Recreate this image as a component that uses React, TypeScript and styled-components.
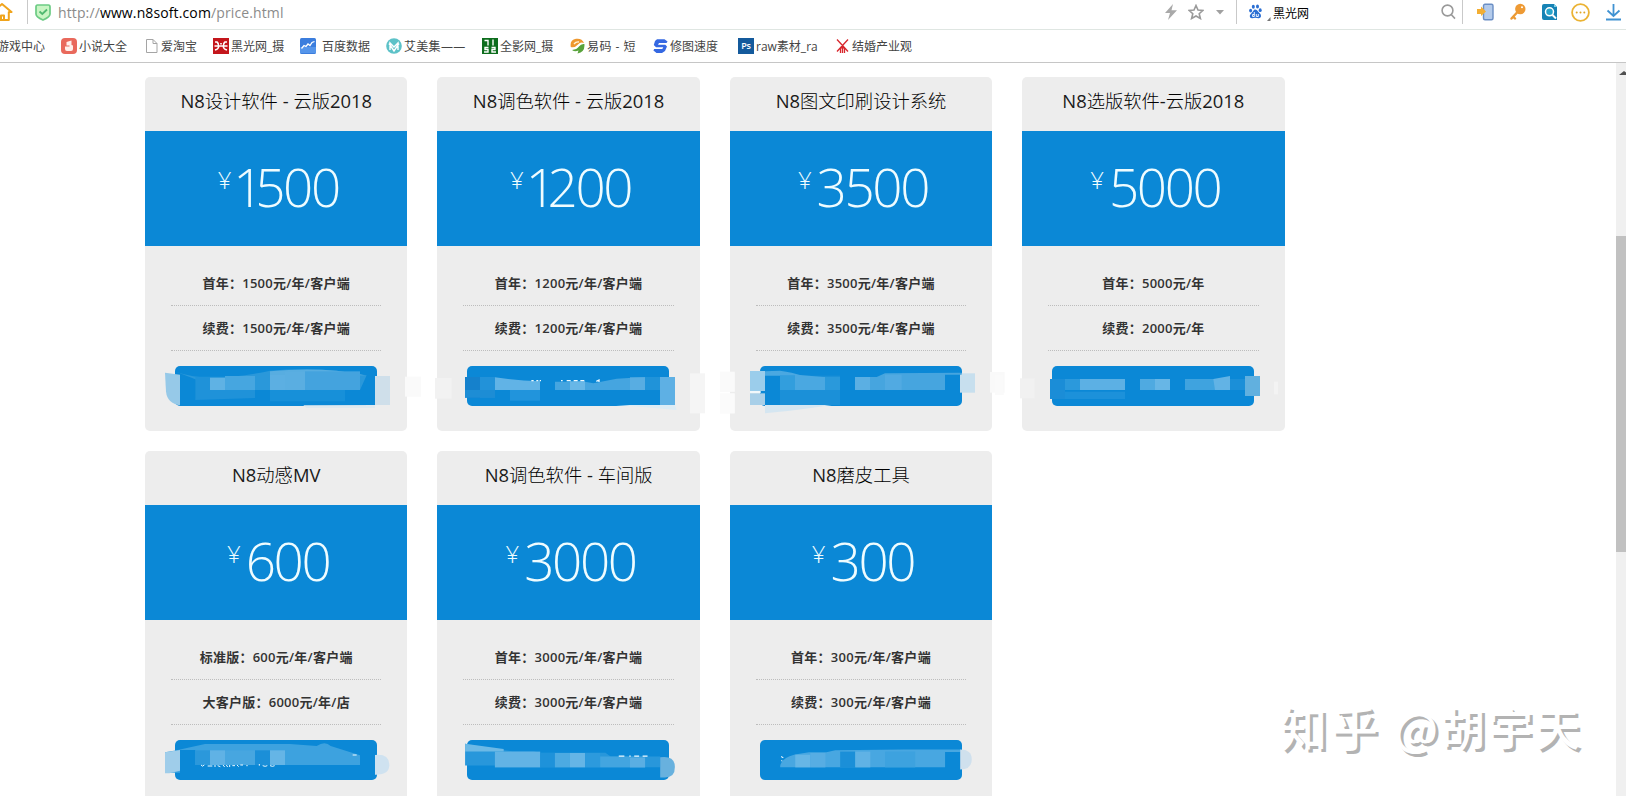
import React from "react";
import styled, { createGlobalStyle } from "styled-components";

const latin = `"Open Sans", "Noto Sans CJK SC", sans-serif`;

const GlobalStyle = createGlobalStyle`
  * { box-sizing: border-box; }
  html, body { margin: 0; height: 100%; overflow: hidden; background: #fff; }
  body { font-family: ${latin}; color: #333; }
`;

const Window = styled.div`
  position: relative;
  display: flex;
  flex-direction: column;
  width: 1626px;
  height: 796px;
  overflow: hidden;
`;

const AddressBar = styled.header`
  display: flex;
  align-items: center;
  flex: none;
  height: 30px;
  padding-bottom: 5px;
  border-bottom: 1px solid #dfe6e2;
`;

const Slot = styled.span<{ $w: number; $dy?: number }>`
  display: flex;
  flex: none;
  width: ${(p) => p.$w}px;
  margin-top: ${(p) => p.$dy ?? 0}px;
`;

const Divider = styled.span<{ $w: number }>`
  flex: none;
  align-self: flex-start;
  width: ${(p) => p.$w}px;
  height: 24px;
  border-left: 1px solid #c9c9c9;
`;

const Url = styled.span`
  width: 1107px;
  padding-top: 2px;
  font-size: 14px;
  line-height: 20px;
  letter-spacing: 0.12px;
  color: #8b8b8b;
  white-space: nowrap;
  b { font-weight: 400; color: #000; }
`;

const SearchText = styled.span`
  width: 168px;
  padding-top: 1px;
  font: 12px/18px "Noto Sans CJK SC", sans-serif;
  color: #000;
`;

const Bookmarks = styled.nav`
  display: flex;
  align-items: center;
  flex: none;
  height: 33px;
  border-bottom: 1px solid #c6c6c6;
`;

const Bookmark = styled.span<{ $w: number; $gap?: number; $shift?: number; $ls?: number }>`
  display: flex;
  align-items: center;
  flex: none;
  gap: ${(p) => p.$gap ?? 2}px;
  width: ${(p) => p.$w}px;
  margin-left: ${(p) => p.$shift ?? 0}px;
  font: 12px/18px "Open Sans", "Noto Sans CJK SC", sans-serif;
  letter-spacing: ${(p) => p.$ls ?? 0}px;
  color: #444;
  white-space: nowrap;
  svg { flex: none; }
`;

const Label = styled.span`
  padding-top: 1px;
`;

const Body = styled.div`
  display: flex;
  justify-content: space-between;
  flex: 1;
  min-height: 0;
`;

const Grid = styled.main`
  display: grid;
  grid-template-columns: repeat(4, 262.4px);
  grid-auto-rows: 354px;
  column-gap: 30px;
  row-gap: 20px;
  padding: 14px 0 0 145px;
`;

const Card = styled.section`
  position: relative;
  display: flex;
  flex-direction: column;
  border-radius: 5px;
  background: #ededed;
`;

const Title = styled.h3`
  height: 54px;
  margin: 0;
  text-align: center;
  font: 300 18.3px/48px "Open Sans", "Noto Sans CJK SC", sans-serif;
  color: #000;
`;

const LatinRun = styled.span`
  font-weight: 400;
  font-size: 18.4px;
  color: #1a1a1a;
`;

const Price = styled.div`
  display: flex;
  justify-content: center;
  height: 115px;
  padding-left: 4px;
  background: #0b88d6;
  color: #effcff;
  font-family: ${latin};
  font-weight: 300;
`;

const Yen = styled.span<{ $tight: boolean }>`
  margin-right: ${(p) => (p.$tight ? 2 : 5)}px;
  font-size: 24px;
  line-height: 98px;
`;

const Amount = styled.span`
  font-size: 53px;
  line-height: 112px;
  letter-spacing: -2.4px;
`;

const NarrowOne = styled.span`
  letter-spacing: -8.4px;
`;

const Features = styled.ul`
  margin: 15px 26px 0;
  padding: 0;
  list-style: none;
`;

const Feature = styled.li`
  height: 45px;
  border-bottom: 1px dotted #bdbdbd;
  text-align: center;
  font: 600 13px/44px "Open Sans", "Noto Sans CJK SC", sans-serif;
  letter-spacing: 0.26px;
  color: #333;
`;

const BuyButton = styled.div`
  width: 202px;
  height: 40px;
  margin: 15px 0 0 30px;
  border-radius: 5px;
  background: #0b88d6;
`;

const Smudge = styled.svg<{ $x: number; $y: number }>`
  position: absolute;
  z-index: 1;
  left: ${(p) => p.$x}px;
  top: ${(p) => p.$y}px;
  overflow: visible;
  pointer-events: none;
`;

const Scrollbar = styled.div`
  flex: none;
  width: 10px;
  background: #f0f0f0;
  overflow: hidden;
`;

const ArrowUp = styled.div`
  margin: 8px 0 0 3px;
  width: 0;
  border: 5px solid transparent;
  border-top: 0;
  border-bottom: 4px solid #505050;
`;

const Thumb = styled.div`
  height: 316px;
  margin-top: 161px;
  background: #c1c1c1;
`;

const Watermark = styled.div`
  position: absolute;
  left: 1280px;
  top: 696px;
  font: 500 45px/60px "Noto Sans CJK SC", sans-serif;
  letter-spacing: 2.4px;
  white-space: nowrap;
  color: #fff;
  text-shadow: 3px 3px 0 #b3b3b3;
`;

const Brand = styled.span`
  font-size: 47px;
  letter-spacing: 3.8px;
`;

type Block = [number, number, number, number, string];

const blocks = (list: Block[]) =>
  list.map(([x, y, w, h, fill], i) => <rect key={i} x={x} y={y} width={w} height={h} fill={fill} />);

type Product = {
  title: string;
  price: number;
  rows: [string, string];
  dx: number;
  dy: number;
  smudge: React.ReactNode;
};

const products: Product[] = [
  {
    title: "N8设计软件 - 云版2018",
    price: 1500,
    rows: ["首年：1500元/年/客户端", "续费：1500元/年/客户端"],
    dx: -15,
    dy: 173,
    smudge: (
      <>
        <path d="M105 368L150 374V466Q112 460 108 425Z" fill="#96c9e8" />
        <rect x="735" y="378" width="45" height="87" fill="#cfdfea" />
        <path d="M520 466L735 465V474H530Z" fill="#dfe9ef" />
        <path d="M140 366Q190 384 250 383Q330 382 420 362Q520 354 620 362L710 376L690 420H240L196 388Z" fill="#2a98da" />
        <path d="M420 364Q520 354 620 362L705 376H420Z" fill="#58ade0" />
        <path d="M196 380H375V444L196 450Z" fill="#1f92d9" />
        {blocks([[240, 383, 45, 37, "#5fb2e4"], [285, 378, 90, 42, "#46a6e0"], [420, 374, 45, 46, "#5cafe2"], [465, 366, 60, 54, "#5aaee1"], [525, 364, 165, 56, "#44a3de"], [420, 420, 225, 34, "#1790d9"], [825, 380, 48, 60, "#fafafa"]])}
      </>
    ),
  },
  {
    title: "N8调色软件 - 云版2018",
    price: 1200,
    rows: ["首年：1200元/年/客户端", "续费：1200元/年/客户端"],
    dx: -7,
    dy: 263,
    smudge: (
      <>
        {blocks([[105, 111, 45, 62, "#1581cc"], [150, 111, 45, 62, "#2292d9"], [105, 150, 90, 23, "#1d8dd5"], [240, 150, 90, 32, "#2194dc"], [690, 111, 45, 84, "#5eb0e4"], [645, 111, 45, 39, "#2093d9"], [15, 114, 50, 62, "#f2f2f2"], [780, 100, 45, 120, "#f5f5f5"], [870, 97, 44, 58, "#f8f8f8"], [870, 161, 44, 59, "#f9f9f9"]])}
        <path d="M195 112Q260 122 330 124V150H195Z" fill="#61b3e6" />
        <path d="M375 125H465L490 130L560 116L645 111V150H375Z" fill="#45a5e0" />
        <rect x="420" y="124" width="45" height="26" fill="#68b7e7" />
        <rect x="600" y="112" width="45" height="38" fill="#58ade2" />
        <path d="M558 195H735L740 210L630 200Z" fill="#dcecf5" />
        <path d="M304 122h7m8 0h6m4 0h4m60 0h5m12 0h12m9 0h12m8 0h12m36 2l8 -4v6" fill="none" stroke="#effaff" strokeWidth="4" />
      </>
    ),
  },
  {
    title: "N8图文印刷设计系统",
    price: 3500,
    rows: ["首年：3500元/年/客户端", "续费：3500元/年/客户端"],
    dx: -20,
    dy: 263,
    smudge: (
      <>
        {blocks([[120, 93, 45, 60, "#9bcdeb"], [120, 153, 32, 6, "#f2f8fb"], [120, 160, 45, 35, "#a8cfe8"], [210, 107, 180, 88, "#1b90d8"], [750, 100, 45, 58, "#c7dfee"], [30, 95, 44, 60, "#fafafa"], [30, 160, 44, 60, "#fbfbfb"], [840, 96, 44, 62, "#f9f9f9"]])}
        <path d="M165 94L210 92Q250 98 270 105L340 111H390V150H255V107H165Z" fill="#4aa8e1" />
        <rect x="210" y="107" width="45" height="43" fill="#329edd" />
        <rect x="345" y="111" width="45" height="39" fill="#2a99db" />
        <path d="M435 111H500L525 100L755 98V104H705V150H435Z" fill="#46a5df" />
        <rect x="435" y="111" width="45" height="39" fill="#5bafe3" />
        <rect x="525" y="104" width="50" height="46" fill="#51aae2" />
        <path d="M165 195H365Q300 205 240 212L165 220Z" fill="#d5e6f1" />
      </>
    ),
  },
  {
    title: "N8选版软件-云版2018",
    price: 5000,
    rows: ["首年：5000元/年", "续费：2000元/年"],
    dx: -22,
    dy: 173,
    smudge: (
      <>
        {blocks([[150, 387, 45, 60, "#1b8dd7"], [195, 387, 45, 33, "#2b99dc"], [195, 425, 180, 22, "#1c91da"], [240, 387, 135, 33, "#5cb0e4"], [420, 387, 90, 33, "#4faae1"], [465, 387, 45, 33, "#67b6e6"], [555, 387, 90, 33, "#3fa3df"], [690, 387, 45, 33, "#1b8fd8"], [735, 378, 45, 60, "#61b0df"], [60, 385, 44, 60, "#f1f1f1"], [822, 395, 12, 38, "#f3f3f3"], [-15, 375, 26, 60, "#fafafa"]])}
        <path d="M640 387L690 378V420H645Z" fill="#62b3e5" />
      </>
    ),
  },
  {
    title: "N8动感MV",
    price: 600,
    rows: ["标准版：600元/年/客户端", "大客户版：6000元/年/店"],
    dx: -15,
    dy: 189,
    smudge: (
      <>
        <path d="M105 337L140 331L225 312H480L560 318Q585 302 602 318L690 346V375H196V330H150V398H105Z" fill="#3da2df" />
        <path d="M105 337L150 330V392L118 400H105Z" fill="#9fcdea" />
        {blocks([[196, 331, 44, 44, "#2b98db"], [240, 331, 45, 44, "#60b2e5"], [285, 331, 90, 44, "#47a6e0"], [375, 331, 45, 44, "#1b8fd8"], [420, 331, 45, 44, "#65b5e6"]])}
        <path d="M735 345Q778 340 778 376Q778 405 735 404Z" fill="#cfe2f0" />
        <path d="M213 375q4 7 10 0m10 3h14m8 -3v6m8 -4l8 3m8 -5l5 6m5 -6l4 6m6 -6v6m8 -4h8m6 -2l5 5m5 -5h8m10 2h4m35 -5v5m10 0q8 4 14 0m8 0q8 4 14 0" fill="none" stroke="#effaff" strokeWidth="3" />
        <path d="M668 345h12" stroke="#effaff" strokeWidth="3" />
      </>
    ),
  },
  {
    title: "N8调色软件 - 车间版",
    price: 3000,
    rows: ["首年：3000元/年/客户端", "续费：3000元/年/客户端"],
    dx: -7,
    dy: 269,
    smudge: (
      <g transform="scale(1.0526)">
        <path d="M100 68Q165 80 235 89H295L315 93H500L515 104H656V135H185V130H100Z" fill="#2897db" />
        <path d="M100 68L210 83V90H100Z" fill="#6cb9e6" />
        {blocks([[185, 90, 129, 45, "#62b3e5"], [314, 94, 42, 41, "#1e92da"], [356, 94, 43, 41, "#4caae2"], [399, 94, 43, 41, "#65b5e6"], [442, 94, 43, 41, "#2c9add"], [485, 104, 128, 31, "#43a5e0"], [570, 108, 43, 27, "#5aaee3"]])}
        <path d="M656 106Q698 100 698 134Q698 164 670 164H656Z" fill="#68b1de" />
        <path d="M538 103h16m14 0h4m10 0h14m10 0h14" stroke="#effaff" strokeWidth="3" />
      </g>
    ),
  },
  {
    title: "N8磨皮工具",
    price: 300,
    rows: ["首年：300元/年/客户端", "续费：300元/年/客户端"],
    dx: -300,
    dy: 269,
    smudge: (
      <g transform="scale(1.0526)">
        <path d="M998 135Q998 108 1040 98L1080 92H1130L1155 86L1350 84H1512V91H1468V135Z" fill="#48a7e1" />
        {blocks([[1041, 99, 43, 36, "#66b6e6"], [1084, 94, 43, 41, "#57ade3"], [1169, 90, 43, 45, "#1b8fd8"], [1212, 90, 43, 45, "#60b2e5"], [1297, 90, 86, 45, "#3da2df"]])}
        <path d="M1511 84Q1544 84 1544 112Q1544 141 1511 141Z" fill="#cfe0ed" />
        <path d="M1001 104l6 4m-6 8h3" stroke="#effaff" strokeWidth="3" />
      </g>
    ),
  },
];

const Icon16 = (p: { children: React.ReactNode; w?: number }) => (
  <svg width={p.w ?? 16} height="16" viewBox={`0 0 ${p.w ?? 16} 16`}>{p.children}</svg>
);

const Home = () => (
  <svg width="14" height="20" viewBox="0 0 14 20" fill="none" stroke="#f0a41c" strokeWidth="2" strokeLinejoin="round">
    <path d="M-7 10L2 2L11.5 10H8.8V18H-5" /><path d="M1 18V13.5H4V18" />
  </svg>
);

const Shield = () => (
  <svg width="16" height="17" viewBox="0 0 16 17">
    <path d="M2.5 1H13.5Q15 1 15 3V10Q15 13 8 16Q1 13 1 10V3Q1 1 2.5 1Z" fill="#c9f5c4" stroke="#6ccb84" strokeWidth="1.7" />
    <path d="M4.5 7.5L7.3 10L12 5.5" fill="none" stroke="#4fb870" strokeWidth="1.8" />
  </svg>
);

const Bolt = () => (
  <svg width="12" height="17" viewBox="0 0 12 17"><path d="M8 0L0 9H5L3 16L12 6.2H6.5Z" fill="#a9a9a9" /></svg>
);

const Star = () => (
  <svg width="16" height="16" viewBox="0 0 16 16" fill="none" stroke="#9a9a9a" strokeWidth="1.6">
    <path d="M8 1.5L10 6L15 6.4L11.2 9.7L12.4 14.5L8 12L3.6 14.5L4.8 9.7L1 6.4L6 6Z" />
  </svg>
);

const Caret = () => (
  <svg width="8" height="5" viewBox="0 0 8 5"><path d="M0 0H8L4 4.5Z" fill="#a0a0a0" /></svg>
);

const Paw = () => (
  <svg width="22" height="17" viewBox="0 0 22 17" fill="#2b6fd3">
    <ellipse cx="4.3" cy="2.8" rx="1.5" ry="2" /><ellipse cx="8.5" cy="2.4" rx="1.5" ry="2" />
    <ellipse cx="1.6" cy="6.6" rx="1.5" ry="1.9" /><ellipse cx="11.2" cy="6.2" rx="1.5" ry="1.9" />
    <path d="M6.3 5.5C8.5 5.5 9 8 11 9.6C13 12 11.8 14.5 9.5 14.2Q6.3 13.4 3.2 14.2C.6 14.5 0 11.5 2 9.8C4 8 4.3 5.5 6.3 5.5Z" />
    <path d="M5.3 8V12.5H3.6V10.5H5.3M7.3 10V12.5H9.3V10" fill="none" stroke="#fff" strokeWidth=".9" />
    <path d="M21.5 13V17H18Z" fill="#777" />
  </svg>
);

const Magnifier = () => (
  <svg width="15" height="16" viewBox="0 0 15 16" fill="none" stroke="#9a9a9a" strokeWidth="1.6">
    <circle cx="6.5" cy="6.5" r="5.4" /><path d="M10.2 10.5L14 14.6" />
  </svg>
);

const PhoneIn = () => (
  <svg width="17" height="18" viewBox="0 0 17 18">
    <rect x="6.5" y="1.2" width="9.5" height="15.5" rx="1.5" fill="#b4cbeb" stroke="#6a8ec4" strokeWidth="1.4" />
    <path d="M0 6H4V3.5L9 8.5L4 13V11H0Z" fill="#f3ae33" />
  </svg>
);

const Key = () => (
  <svg width="16" height="18" viewBox="0 0 16 18">
    <path d="M7.5 9L1.5 15.5M3.5 14L5 15.5" stroke="#ec9a34" strokeWidth="2.4" strokeLinecap="round" />
    <circle cx="10.3" cy="6" r="5.2" fill="#ee9a34" /><circle cx="12" cy="4.3" r="1" fill="#fff" />
  </svg>
);

const SearchDoc = () => (
  <svg width="16" height="17" viewBox="0 0 16 17">
    <path d="M2 0H12L15 3V16H2Q0 16 0 14V2Q0 0 2 0Z" fill="#1683b5" /><path d="M12 0L15 3H12Z" fill="#7fd0e6" />
    <circle cx="7.5" cy="7.8" r="4" fill="#2aa5cb" stroke="#fff" strokeWidth="1.5" /><path d="M10.5 11L14 14.5" stroke="#fff" strokeWidth="2" />
  </svg>
);

const MoreDots = () => (
  <svg width="19" height="19" viewBox="0 0 19 19">
    <circle cx="9.5" cy="9.5" r="8.4" fill="none" stroke="#ebb334" strokeWidth="1.8" />
    <g fill="#e0a526"><circle cx="5.7" cy="9.5" r="1" /><circle cx="9.5" cy="9.5" r="1" /><circle cx="13.3" cy="9.5" r="1" /></g>
  </svg>
);

const Download = () => (
  <svg width="15" height="17" viewBox="0 0 15 17" fill="none" stroke="#3f92d2" strokeWidth="1.8">
    <path d="M7.5 0V12M1.5 6.5L7.5 12L13.5 6.5M0 15.5H15" />
  </svg>
);

const NovelIcon = () => (
  <Icon16>
    <rect width="16" height="16" rx="4" fill="#e9695c" />
    <path d="M5.5 4L10.5 2.5V7L12 7.5V11Q12 13 10 13H6Q4 13 4 11V8.5H8.5V7.5H5.5Z" fill="#fff0ec" />
  </Icon16>
);
const PageIcon = () => (
  <Icon16 w={13}><path d="M1.5 1.5H8L12 5.5V14.5H1.5ZM8 1.5V5.5H12" fill="#fff" stroke="#a5a5a5" /></Icon16>
);
const HeiguangIcon = () => (
  <Icon16>
    <rect width="16" height="16" fill="#c4161c" />
    <path d="M2 4H4Q6 5.5 5.5 8Q6 11 2 12M14 4H12Q10 5.5 10.5 8Q10 11 14 12M1.5 8H14.5M8 5V6.5" fill="none" stroke="#fff" strokeWidth="1.6" />
  </Icon16>
);
const ChartIcon = () => (
  <Icon16>
    <rect width="16" height="16" rx="1.5" fill="#3b7ddd" /><path d="M0 9H16V15H0Z" fill="#5595ea" />
    <path d="M1.5 10.5L4 7.5L6 8.5L8 6L10 7.5L12 4.5L14.5 3.5" fill="none" stroke="#fff" strokeWidth="1.3" />
  </Icon16>
);
const AimeiIcon = () => (
  <Icon16>
    <circle cx="8" cy="8" r="7.8" fill="#5dc2c8" />
    <path d="M4 12V5L8 9L12 5V12M3 5.5L8 13L13 5.5" fill="none" stroke="#fff" strokeWidth="1.4" />
  </Icon16>
);
const QuanyingIcon = () => (
  <Icon16>
    <rect width="16" height="16" fill="#0d6d1d" />
    <path d="M2.5 2.5H6V7.5M11 1.5V7.5M6.5 9.5H3V11.5H6V14H2M9.5 9.5H13V11.5H10V14H14" fill="none" stroke="#fff" strokeWidth="1.4" />
  </Icon16>
);
const YimaIcon = () => (
  <Icon16 w={15}>
    <path d="M.8 9Q-.5 2 6 .8Q12 0 14 5Q10.5 3.5 8 6.5Q5 10 .8 9Z" fill="#ee982f" />
    <path d="M14.4 6Q15.2 14 7.5 15.5L8.5 12.5Q5 14.2 2 12Q7 11.5 9 8.5Q11 5.5 14.4 6Z" fill="#58a33b" />
    <path d="M4 6Q6 3.5 9 4" fill="none" stroke="#fff3d8" strokeWidth="1.4" />
  </Icon16>
);
const XiutuIcon = () => (
  <Icon16 w={15}>
    <path d="M4 1.2H11.5L14.6 3.6L13.5 5H6L5 6.7H12.3L14 8.6L12 13L9 15H3.5L.4 12.4L1.2 11H9.3L10.3 9.3H3L.8 7L2 3Z" fill="#3568e2" />
  </Icon16>
);
const PsMark = styled.span`
  width: 16px;
  height: 16px;
  background: #145a9c;
  color: #fff;
  text-align: center;
  font: 600 9px/16px "Open Sans", sans-serif;
  letter-spacing: -0.3px;
`;
const KnotIcon = () => (
  <Icon16 w={13}>
    <path d="M1 1.5L6.5 7.5L12 1.5M1 13.5L6.5 7.5L12 13.5M4.5 15V11L6.5 8L8.5 11V15M6.5 9V15" fill="none" stroke="#d8262c" strokeWidth="1.3" />
  </Icon16>
);

const TitleText = ({ text }: { text: string }) => (
  <Title>
    {text.split(/([A-Za-z0-9 -]+)/).map((run, i) => (i % 2 ? <LatinRun key={i}>{run}</LatinRun> : run))}
  </Title>
);

const PriceTag = ({ value }: { value: number }) => {
  const digits = String(value);
  const tight = digits.startsWith("1");
  return (
    <Price>
      <Yen $tight={tight}>¥</Yen>
      <Amount>{tight ? <><NarrowOne>1</NarrowOne>{digits.slice(1)}</> : digits}</Amount>
    </Price>
  );
};

export default function App() {
  return (
    <Window>
      <GlobalStyle />
      <AddressBar>
        <Slot $w={27}><Home /></Slot>
        <Divider $w={8} />
        <Slot $w={23}><Shield /></Slot>
        <Url>http://<b>www.n8soft.com</b>/price.html</Url>
        <Slot $w={23} $dy={1}><Bolt /></Slot>
        <Slot $w={28}><Star /></Slot>
        <Slot $w={20} $dy={1}><Caret /></Slot>
        <Divider $w={13} />
        <Slot $w={24}><Paw /></Slot>
        <SearchText>黑光网</SearchText>
        <Slot $w={21}><Magnifier /></Slot>
        <Divider $w={15} />
        <Slot $w={33}><PhoneIn /></Slot>
        <Slot $w={32}><Key /></Slot>
        <Slot $w={29}><SearchDoc /></Slot>
        <Slot $w={35}><MoreDots /></Slot>
        <Slot $w={15}><Download /></Slot>
      </AddressBar>
      <Bookmarks>
        <Bookmark $w={64} $shift={-3}><Label>游戏中心</Label></Bookmark>
        <Bookmark $w={84}><NovelIcon /><Label>小说大全</Label></Bookmark>
        <Bookmark $w={68} $gap={3}><PageIcon /><Label>爱淘宝</Label></Bookmark>
        <Bookmark $w={87}><HeiguangIcon /><Label>黑光网_摄</Label></Bookmark>
        <Bookmark $w={86} $gap={6}><ChartIcon /><Label>百度数据</Label></Bookmark>
        <Bookmark $w={96} $ls={0.3}><AimeiIcon /><Label>艾美集——</Label></Bookmark>
        <Bookmark $w={88}><QuanyingIcon /><Label>全影网_摄</Label></Bookmark>
        <Bookmark $w={83} $ls={0.5}><YimaIcon /><Label>易码 - 短</Label></Bookmark>
        <Bookmark $w={85}><XiutuIcon /><Label>修图速度</Label></Bookmark>
        <Bookmark $w={98}><PsMark>Ps</PsMark><Label>raw素材_ra</Label></Bookmark>
        <Bookmark $w={90} $gap={3}><KnotIcon /><Label>结婚产业观</Label></Bookmark>
      </Bookmarks>
      <Body>
        <Grid>
          {products.map((p) => (
            <Card key={p.title}>
              <TitleText text={p.title} />
              <PriceTag value={p.price} />
              <Features>
                {p.rows.map((r) => <Feature key={r}>{r}</Feature>)}
              </Features>
              <BuyButton />
              <Smudge $x={p.dx} $y={p.dy} width="300" height="190" viewBox="0 0 900 570">{p.smudge}</Smudge>
            </Card>
          ))}
        </Grid>
        <Scrollbar><ArrowUp /><Thumb /></Scrollbar>
      </Body>
      <Watermark><Brand>知乎</Brand> @胡宇天</Watermark>
    </Window>
  );
}
